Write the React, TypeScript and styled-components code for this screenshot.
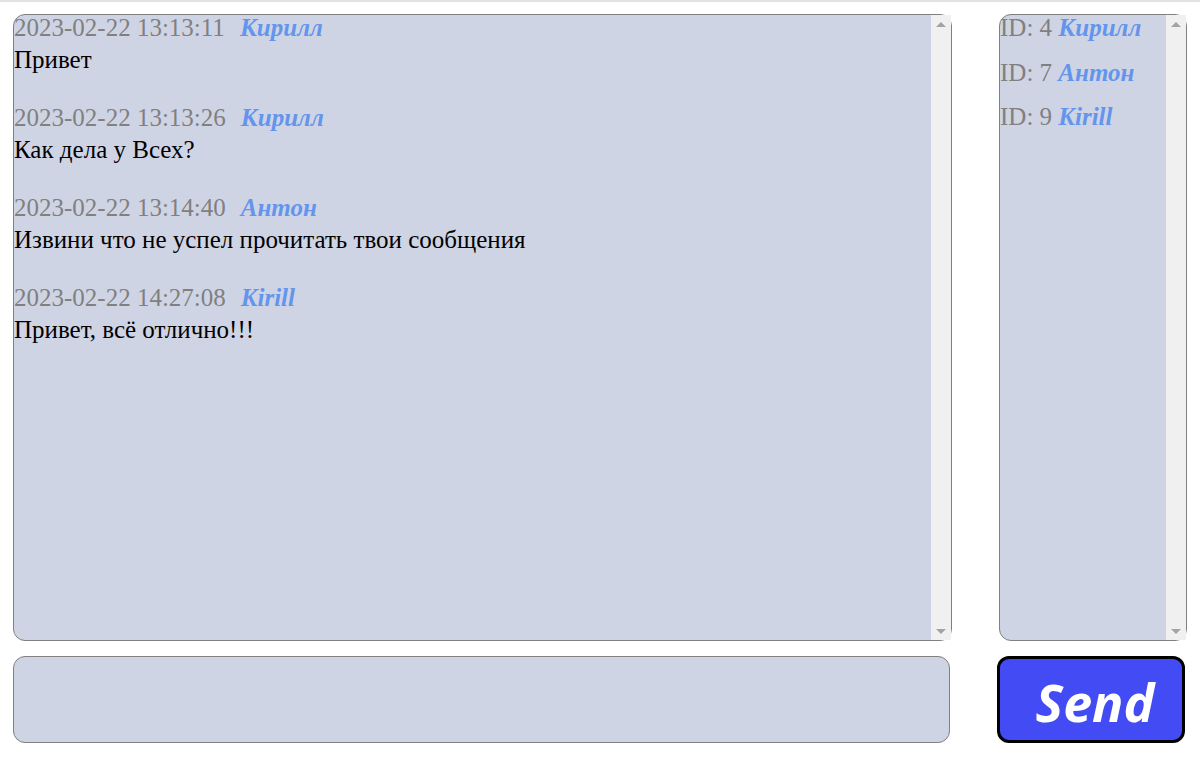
import React from "react";
import styled, { createGlobalStyle } from "styled-components";

const GlobalStyle = createGlobalStyle`
  html, body {
    margin: 0;
    padding: 0;
    background: #ffffff;
    font-family: "Liberation Serif", "Times New Roman", serif;
  }
  * { box-sizing: border-box; }
`;

const TopRule = styled.div`
  height: 2px;
  background: #e2e2e2;
`;

const Page = styled.main`
  padding: 12px 13px 0 13px;
  display: flex;
  flex-direction: column;
  gap: 15px;
`;

const TopRow = styled.div`
  display: flex;
  gap: 47px;
  height: 627px;
`;

const Panel = styled.div<{ $width?: number }>`
  display: flex;
  background: #cfd4e4;
  border: 1px solid #808080;
  border-radius: 12px;
  font-size: 25px;
  ${(p) => (p.$width ? `width: ${p.$width}px; flex: none;` : `flex: 1;`)}
`;

const Scroller = styled.div`
  flex: 1;
  min-width: 0;
  overflow-y: auto;
  scrollbar-width: none;
  &::-webkit-scrollbar { display: none; }
`;

const Track = styled.div`
  width: 20px;
  flex: none;
  background: #f0f0f0;
  display: flex;
  flex-direction: column;
  justify-content: space-between;
`;

const Arrow = styled.div<{ $dir: "up" | "down" }>`
  height: 20px;
  display: flex;
  align-items: center;
  justify-content: center;
  &::before {
    content: "";
    width: 0;
    height: 0;
    border-left: 5px solid transparent;
    border-right: 5px solid transparent;
    ${(p) =>
      p.$dir === "up"
        ? `border-bottom: 5px solid #a3a3a3; margin-top: -2px;`
        : `border-top: 5px solid #a3a3a3; margin-top: 2px;`}
  }
`;

const List = styled.div<{ $gap: number }>`
  display: flex;
  flex-direction: column;
  gap: ${(p) => p.$gap}px;
  margin-top: -3px;
`;

const Entry = styled.div`
  display: flex;
  flex-direction: column;
`;

const Meta = styled.div`
  line-height: 32px;
  white-space: nowrap;
  color: #808080;
`;

const Name = styled.span<{ $offset: number }>`
  color: #6495ed;
  font-weight: bold;
  font-style: italic;
  margin-left: ${(p) => p.$offset}px;
`;

const Text = styled.div`
  line-height: 32px;
  color: #000000;
`;

const UserRow = styled.div`
  line-height: 32px;
  white-space: nowrap;
  color: #808080;
`;

const BottomRow = styled.div`
  display: flex;
  gap: 47px;
  height: 87px;
  padding-right: 2px;
`;

const Input = styled.textarea`
  flex: 1;
  resize: none;
  background: #cfd4e4;
  border: 1px solid #808080;
  border-radius: 12px;
  font-family: "Liberation Serif", serif;
  font-size: 25px;
  outline: none;
`;

const SendButton = styled.button`
  width: 188px;
  flex: none;
  background: #434bf5;
  border: 3px solid #000000;
  border-radius: 12px;
  color: #ffffff;
  font-family: "Open Sans", "Noto Sans", sans-serif;
  font-weight: bold;
  font-style: italic;
  font-size: 52px;
  padding: 4px 0 0 8px;
  cursor: pointer;
`;

const messages = [
  { time: "2023-02-22 13:13:11", name: "Кирилл", text: "Привет" },
  { time: "2023-02-22 13:13:26", name: "Кирилл", text: "Как дела у Всех?" },
  { time: "2023-02-22 13:14:40", name: "Антон", text: "Извини что не успел прочитать твои сообщения" },
  { time: "2023-02-22 14:27:08", name: "Kirill", text: "Привет, всё отлично!!!" },
];

const users = [
  { id: 4, name: "Кирилл" },
  { id: 7, name: "Антон" },
  { id: 9, name: "Kirill" },
];

function ScrollTrack() {
  return (
    <Track>
      <Arrow $dir="up" />
      <Arrow $dir="down" />
    </Track>
  );
}

export default function App() {
  return (
    <>
      <GlobalStyle />
      <TopRule />
      <Page>
        <TopRow>
          <Panel>
            <Scroller>
              <List $gap={26}>
                {messages.map((m, i) => (
                  <Entry key={i}>
                    <Meta>
                      {m.time}
                      <Name $offset={15}>{m.name}</Name>
                    </Meta>
                    <Text>{m.text}</Text>
                  </Entry>
                ))}
              </List>
            </Scroller>
            <ScrollTrack />
          </Panel>
          <Panel $width={188}>
            <Scroller>
              <List $gap={12.5}>
                {users.map((u) => (
                  <UserRow key={u.id}>
                    ID: {u.id} <Name $offset={0}>{u.name}</Name>
                  </UserRow>
                ))}
              </List>
            </Scroller>
            <ScrollTrack />
          </Panel>
        </TopRow>
        <BottomRow>
          <Input />
          <SendButton>Send</SendButton>
        </BottomRow>
      </Page>
    </>
  );
}
